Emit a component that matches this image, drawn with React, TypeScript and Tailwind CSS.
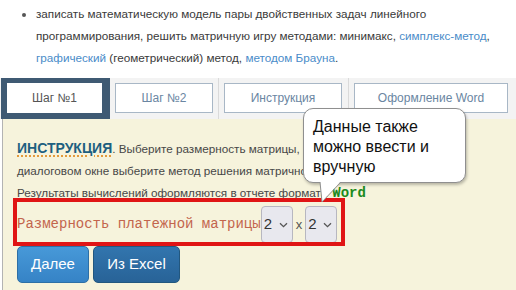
import React from "react";

function Chevron() {
  return (
    <svg width="9" height="6" viewBox="0 0 9 6" className="ml-auto mr-[4px]">
      <path d="M1 1.2 L4.5 4.6 L8 1.2" fill="none" stroke="#555" strokeWidth="1.3" />
    </svg>
  );
}

function Sel() {
  return (
    <div className="flex h-[37px] w-[32px] items-center rounded-[4px] border border-[#b7b7c0] bg-[#e8e8ee] pl-[2px] text-[15px] text-[#333]">
      <span>2</span>
      <Chevron />
    </div>
  );
}

export default function App() {
  return (
    <div
      className="relative h-[290px] w-[516px] overflow-hidden bg-white"
      style={{ fontFamily: '"Liberation Sans", Arial, sans-serif' }}
    >
      <ul className="h-[78px] list-disc pl-[36px] pt-[3px] text-[11.7px] leading-[22px] text-[#3a3a3a]">
        <li className="marker:text-[#555]">
          записать математическую модель пары двойственных задач линейного
          <br />
          программирования, решить матричную игру методами: минимакс,{" "}
          <span className="text-[#4a8cc9]">симплекс-метод</span>,
          <br />
          <span className="text-[#4a8cc9]">графический</span> (геометрический) метод,{" "}
          <span className="text-[#4a8cc9]">методом Брауна</span>.
        </li>
      </ul>

      <div className="flex h-[41px] items-start bg-[#f3f3f3]">
        <div className="ml-[1px] h-[41px] w-[109px] bg-[#3f5a73] pl-[6px] pr-[8px] pt-[5px]">
          <div className="flex h-[30px] items-center justify-center bg-white text-[12px] text-[#555]">
            Шаг №1
          </div>
        </div>
        <div className="ml-[5px] mt-[5px] flex h-[30px] w-[98px] items-center justify-center border border-[#a8b7c6] bg-white text-[12px] text-[#6a86a2]">
          Шаг №2
        </div>
        <div className="ml-[5px] h-[41px] w-px bg-[#dadada]" />
        <div className="ml-[5px] mt-[5px] flex h-[30px] w-[118px] items-center justify-center border border-[#a8b7c6] bg-white text-[12px] text-[#6a86a2]">
          Инструкция
        </div>
        <div className="ml-[6px] h-[41px] w-px bg-[#dadada]" />
        <div className="ml-[5px] mt-[5px] flex h-[30px] w-[154px] items-center justify-center border border-[#a8b7c6] bg-white text-[12px] text-[#6a86a2]">
          Оформление Word
        </div>
      </div>

      <div className="relative ml-[2px] h-[171px] border-l border-[#b3b3b3] bg-[#f6f3dc] pl-[14px] pt-[18px]">
        <div className="whitespace-nowrap text-[11.7px] leading-[22px] text-[#474747]">
          <div>
            <span className="text-[14px] font-bold text-[#1e5f80] underline decoration-[#e39a3c] decoration-dotted decoration-2 underline-offset-2">
              ИНСТРУКЦИЯ
            </span>
            . Выберите размерность матрицы, в
          </div>
          <div>диалоговом окне выберите метод решения матричной</div>
          <div>
            Результаты вычислений оформляются в отчете формата
            <span
              className="ml-[5px] text-[14px] font-bold text-[#1c8a1c]"
              style={{ fontFamily: '"Liberation Mono", monospace' }}
            >
              Word
            </span>
          </div>
        </div>

        <div className="mt-[2px] flex h-[37px] items-center">
          <span
            className="text-[14px] text-[#c3654d]"
            style={{ fontFamily: '"Liberation Mono", "Courier New", monospace' }}
          >
            Размерность платежной матрицы
          </span>
          <Sel />
          <span className="mx-[3px] text-[13px] text-[#555]">x</span>
          <Sel />
        </div>

        <div className="mt-[3px] flex gap-[4px]">
          <div className="flex h-[37px] w-[72px] items-center justify-center rounded-[5px] border border-[#2d6fa6] bg-gradient-to-b from-[#4799d8] to-[#3683c6] text-[15px] text-white">
            Далее
          </div>
          <div className="flex h-[37px] w-[87px] items-center justify-center rounded-[5px] border border-[#22577f] bg-gradient-to-b from-[#3275ae] to-[#286397] text-[15px] text-white">
            Из Excel
          </div>
        </div>

        <div className="absolute left-[10px] top-[79px] h-[48px] w-[332px] border-[4px] border-[#e01515]" />
      </div>

      <div className="absolute left-[303px] top-[108px] h-[75px] w-[163px] rounded-[10px] border border-[#8f8f8f] bg-white pl-[9px] pt-[8px] text-[16px] leading-[20px] text-[#111] shadow-[1px_2px_3px_rgba(0,0,0,0.25)]">
        Данные также
        <br />
        можно ввести и
        <br />
        вручную
        <svg
          width="24"
          height="24"
          viewBox="0 0 24 24"
          className="absolute left-[15px] top-[72px] overflow-visible"
        >
          <polygon points="1,0 3,21 22,0" fill="white" />
          <path d="M1 1 L3 21 L22 1" fill="none" stroke="#8f8f8f" strokeWidth="1" />
        </svg>
      </div>
    </div>
  );
}
